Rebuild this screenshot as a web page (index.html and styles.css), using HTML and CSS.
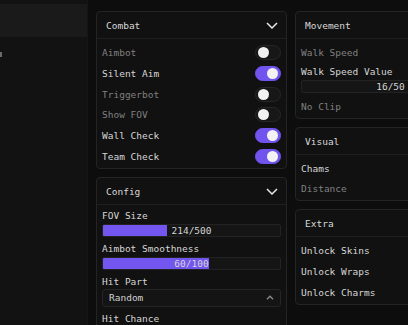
FILE: index.html
```html
<!DOCTYPE html>
<html>
<head>
<meta charset="utf-8">
<link rel="stylesheet" href="styles.css">
</head>
<body>
<div class="app">
  <aside class="sidebar">
    <div class="side-head"></div>
    <div class="side-list"><span class="side-tab"></span></div>
  </aside>
  <main class="main">
    <div class="col">
      <section class="card">
        <header class="card-head"><span>Combat</span>
          <svg class="chev" width="12" height="7" viewBox="0 0 12 7"><polyline points="1,1 6,6 11,1" fill="none" stroke="#e6e6e6" stroke-width="1.5"/></svg>
        </header>
        <div class="card-body">
          <div class="row"><span class="lbl dim">Aimbot</span><span class="tog"><i></i></span></div>
          <div class="row"><span class="lbl">Silent Aim</span><span class="tog on"><i></i></span></div>
          <div class="row"><span class="lbl dim">Triggerbot</span><span class="tog"><i></i></span></div>
          <div class="row"><span class="lbl dim">Show FOV</span><span class="tog"><i></i></span></div>
          <div class="row"><span class="lbl">Wall Check</span><span class="tog on"><i></i></span></div>
          <div class="row"><span class="lbl">Team Check</span><span class="tog on"><i></i></span></div>
        </div>
      </section>
      <section class="card">
        <header class="card-head"><span>Config</span>
          <svg class="chev" width="12" height="7" viewBox="0 0 12 7"><polyline points="1,1 6,6 11,1" fill="none" stroke="#e6e6e6" stroke-width="1.5"/></svg>
        </header>
        <div class="card-body form">
          <div class="field"><span class="lbl">FOV Size</span>
            <div class="slider"><div class="fill" style="width:36.4%"></div><span class="val">214/500</span></div></div>
          <div class="field"><span class="lbl">Aimbot Smoothness</span>
            <div class="slider"><div class="fill" style="width:60%"></div><span class="val">60/100</span></div></div>
          <div class="field"><span class="lbl">Hit Part</span>
            <div class="select"><span>Random</span>
              <svg width="8" height="5" viewBox="0 0 8 5"><polyline points="1,4.2 4,1.2 7,4.2" fill="none" stroke="#8c8c8c" stroke-width="1.3"/></svg></div></div>
          <div class="field"><span class="lbl">Hit Chance</span></div>
        </div>
      </section>
    </div>
    <div class="col">
      <section class="card">
        <header class="card-head"><span>Movement</span></header>
        <div class="card-body">
          <div class="row"><span class="lbl dim">Walk Speed</span><span class="tog"><i></i></span></div>
          <div class="field"><span class="lbl">Walk Speed Value</span>
            <div class="slider"><div class="fill" style="width:0%"></div><span class="val">16/50</span></div></div>
          <div class="row"><span class="lbl dim">No Clip</span><span class="tog"><i></i></span></div>
        </div>
      </section>
      <section class="card">
        <header class="card-head"><span>Visual</span></header>
        <div class="card-body">
          <div class="row"><span class="lbl">Chams</span><span class="tog on"><i></i></span></div>
          <div class="row"><span class="lbl dim">Distance</span><span class="tog"><i></i></span></div>
        </div>
      </section>
      <section class="card">
        <header class="card-head"><span>Extra</span></header>
        <div class="card-body">
          <div class="row"><span class="lbl">Unlock Skins</span></div>
          <div class="row"><span class="lbl">Unlock Wraps</span></div>
          <div class="row"><span class="lbl">Unlock Charms</span></div>
        </div>
      </section>
    </div>
  </main>
</div>
</body>
</html>
```
FILE: styles.css
```css
* { box-sizing: border-box; }
html, body { margin: 0; padding: 0; }
body {
  width: 408px;
  height: 325px;
  overflow: hidden;
  background: #0d0d0d;
  font-family: "DejaVu Sans Mono", "Liberation Mono", monospace;
  font-size: 9.5px;
  color: #dadada;
}
.app { display: flex; width: 408px; height: 325px; }
.sidebar {
  width: 88px;
  flex: none;
  background: #121212;
  padding-top: 4px;
  border-right: 1px solid #151515;
}
.side-head { height: 33px; background: #1a1a1a; }
.side-list { padding-top: 15px; }
.side-tab { display: block; width: 2px; height: 5px; background: #6a6a6a; }
.main {
  flex: 1;
  display: grid;
  grid-template-columns: 191px 191px;
  column-gap: 8px;
  align-items: start;
  padding: 11px 0 0 8px;
  overflow: hidden;
}
.col { display: flex; flex-direction: column; gap: 8px; }
.card {
  background: #111111;
  border: 1px solid #242424;
  border-radius: 4px;
}
.card-head {
  height: 27px;
  border-bottom: 1px solid #1f1f1f;
  display: flex;
  align-items: center;
  justify-content: space-between;
  padding: 1px 8px 0 9px;
  color: #d8d8d8;
}
.chev { margin-top: 0; }
.card-body {
  padding: 6px 5px 4px 5px;
  display: flex;
  flex-direction: column;
  gap: 5.8px;
}
.card-body.form { padding-top: 5px; gap: 6px; }
.row {
  height: 15px;
  display: flex;
  align-items: center;
  justify-content: space-between;
}
.row .lbl { padding-top: 1px; }
.lbl { line-height: 12px; color: #d6d6d6; white-space: nowrap; }
.lbl.dim { color: #808080; }
.tog {
  width: 26px;
  height: 15px;
  border-radius: 8px;
  background: #171717;
  border: 1px solid #262626;
  display: flex;
  align-items: center;
  padding: 0 2px;
  flex: none;
}
.tog i {
  display: block;
  width: 11px;
  height: 11px;
  border-radius: 50%;
  background: #f2f2f2;
}
.tog.on { background: #7153ee; border-color: #7153ee; justify-content: flex-end; }
.field { display: flex; flex-direction: column; gap: 2px; }
.slider {
  position: relative;
  height: 13px;
  background: #151515;
  border: 1px solid #232323;
  border-radius: 2px;
  overflow: hidden;
}
.fill { height: 100%; background: #7356f0; }
.val {
  position: absolute;
  inset: 0;
  text-align: center;
  line-height: 11px;
  color: #d4d4d4;
}
.select {
  height: 18px;
  margin-top: -1px;
  background: #141414;
  border: 1px solid #252525;
  border-radius: 3px;
  display: flex;
  align-items: center;
  justify-content: space-between;
  padding: 0 6px 0 6px;
  color: #d0d0d0;
}
```
